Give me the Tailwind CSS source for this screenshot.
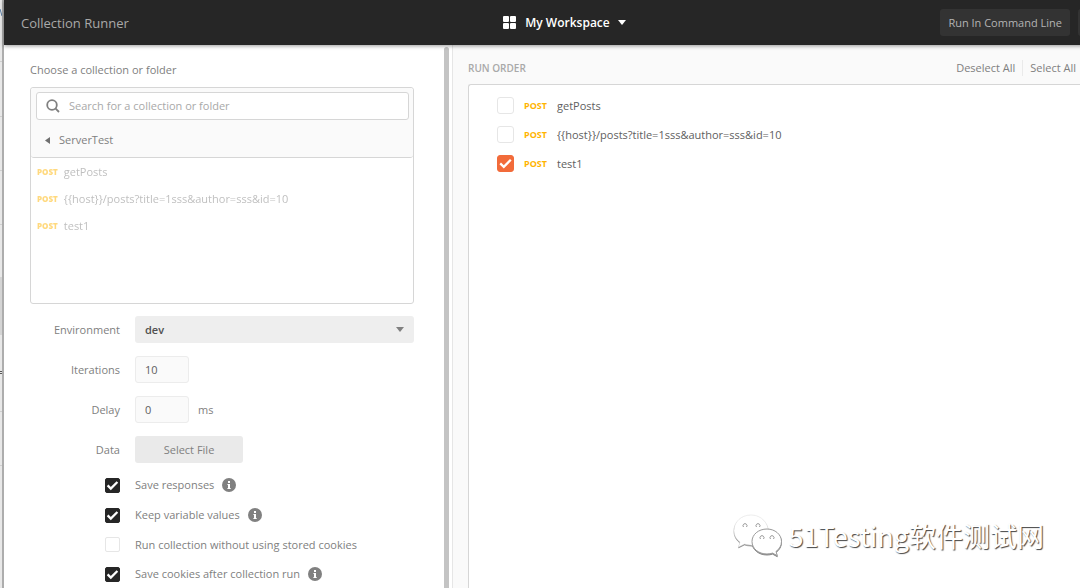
<!DOCTYPE html>
<html lang="en">
<head>
    <meta charset="UTF-8">
    <meta name="viewport" content="width=device-width, initial-scale=1.0">
    <title>Collection Runner</title>
    <script src="https://cdn.jsdelivr.net/npm/@tailwindcss/browser@4"></script>
</head>
<body class="font-['Open_Sans','Noto_Sans_CJK_SC',sans-serif] text-[11px] leading-4 text-[#808080]">
    <div class="relative flex h-screen overflow-hidden bg-white">
        <!-- sliver of the window behind -->
        <div class="flex w-1 shrink-0 flex-col border-r-2 border-[#adadad] bg-[#e8e8e8] overflow-hidden">
            <div class="h-[62px] border-b border-[#cfcfcf] pt-[9px]"><svg class="h-2 w-[2px]" viewBox="0 0 2 8" stroke="#5a7ea6"><path d="M0 0l2 7" /></svg></div>
            <div class="h-[55px] border-b border-[#cfcfcf]"></div>
            <div class="h-[54px] border-b border-[#cfcfcf]"></div>
            <div class="h-[54px] border-b border-[#cfcfcf]"></div>
            <div class="h-[52px]"></div>
            <div class="h-[58px] bg-[#d4d4d4]"></div>
            <div class="h-[77px] border-b border-[#cfcfcf] pt-9"><svg class="h-1 w-[2px]" viewBox="0 0 2 4" fill="#555"><path d="M0 0h2v1H0zM0 2h2v1H0z" /></svg></div>
            <div class="h-[54px] border-b border-[#cfcfcf]"></div>
        </div>

        <div class="flex min-w-0 flex-1 flex-col">
            <header class="relative z-10 -mr-7 flex h-[45px] shrink-0 items-center bg-[#262626] pl-[17px] shadow-[0_1px_4px_rgba(0,0,0,0.4)]">
                <h1 class="flex-1 text-[13px] text-[#a9a9a9]">Collection Runner</h1>
                <button type="button" class="flex items-center text-[12px] font-semibold text-white">
                    <svg class="mr-[9px] size-[13px]" viewBox="0 0 13 13" fill="currentColor">
                        <rect width="6" height="6" rx="1" />
                        <rect x="7" width="6" height="6" rx="1" />
                        <rect y="7" width="6" height="6" rx="1" />
                        <rect x="7" y="7" width="6" height="6" rx="1" />
                    </svg>
                    My Workspace
                    <svg class="ml-2 h-[5px] w-2" viewBox="0 0 8 5" fill="currentColor"><path d="M0 0h8L4 5z" /></svg>
                </button>
                <div class="flex flex-1 justify-end gap-2">
                    <button type="button" class="h-[27px] shrink-0 rounded-[3px] bg-[#333] px-2 text-[11px] text-[#b4b4b4]">Run In Command Line</button>
                    <button type="button" class="h-[27px] w-[30px] rounded-[3px] bg-[#333]" aria-label="Docs"></button>
                </div>
            </header>

            <main class="flex min-h-0 flex-1">
                <section class="w-[440px] shrink-0 pt-[17px] pr-[30px] pl-[26px]">
                    <label for="search" class="block">Choose a collection or folder</label>
                    <div class="mt-[9px] h-[217px] rounded-[3px] border border-[#d6d6d6]">
                        <div class="rounded-[3px] border-b border-[#d6d6d6] bg-[#fafafa] py-1 pr-1 pl-[5px]">
                            <div class="flex h-[28px] items-center rounded-[3px] border border-[#d6d6d6] bg-white pl-[9px]">
                                <svg class="size-[14px] shrink-0" viewBox="0 0 14 14" fill="none" stroke="#808080" stroke-width="1.8"><circle cx="6" cy="6" r="4.8" /><path d="M9.4 9.4l3.6 3.6" /></svg>
                                <input id="search" type="text" placeholder="Search for a collection or folder" class="ml-[9px] min-w-0 flex-1 outline-none placeholder:text-[#a9a9a9]">
                            </div>
                            <button type="button" class="flex h-[33px] items-center pt-[7px] pl-[9px]">
                                <svg class="mr-[9px] h-[7px] w-[5px]" viewBox="0 0 5 7" fill="#707070"><path d="M5 0v7L0 3.5z" /></svg>
                                ServerTest
                            </button>
                        </div>
                        <ul class="pl-[6px] text-[#808080] opacity-50">
                            <li class="flex h-[27px] items-center gap-[6px]"><span class="text-[8px] font-extrabold text-[#ffb400]">POST</span>getPosts</li>
                            <li class="flex h-[27px] items-center gap-[6px]"><span class="text-[8px] font-extrabold text-[#ffb400]">POST</span>{{host}}/posts?title=1sss&amp;author=sss&amp;id=10</li>
                            <li class="flex h-[27px] items-center gap-[6px]"><span class="text-[8px] font-extrabold text-[#ffb400]">POST</span>test1</li>
                        </ul>
                    </div>

                    <form class="mt-3">
                        <div class="grid grid-cols-[90px_1fr] items-center gap-x-[15px] gap-y-[13px]">
                            <label for="env" class="text-right">Environment</label>
                            <div class="relative">
                                <select id="env" class="block h-[27px] w-full appearance-none rounded-[3px] bg-[#eee] px-[10px] font-semibold text-[#505050]">
                                    <option>dev</option>
                                </select>
                                <svg class="pointer-events-none absolute top-[11px] right-[10px] h-[5px] w-2" viewBox="0 0 8 5" fill="#808080"><path d="M0 0h8L4 5z" /></svg>
                            </div>
                            <label for="iterations" class="text-right">Iterations</label>
                            <div><input id="iterations" type="text" value="10" class="block h-[27px] w-[54px] rounded-[3px] border border-[#ececec] bg-[#fafafa] px-[9px] text-[#606060]"></div>
                            <label for="delay" class="text-right">Delay</label>
                            <div class="flex items-center gap-[9px]"><input id="delay" type="text" value="0" class="block h-[27px] w-[54px] rounded-[3px] border border-[#ececec] bg-[#fafafa] px-[9px] text-[#606060]">ms</div>
                            <label for="file" class="text-right">Data</label>
                            <div><button id="file" type="button" class="block h-[27px] w-[108px] rounded-[3px] bg-[#eaeaea]">Select File</button></div>
                        </div>

                        <div class="mt-[7px] pl-[75px]">
                            <div class="flex h-[30px] items-center">
                                <span class="mr-[15px] grid size-[15px]">
                                    <input id="save" type="checkbox" checked class="peer col-start-1 row-start-1 size-[15px] appearance-none rounded-[2px] border border-[#e6e6e6] bg-white checked:border-[#262626] checked:bg-[#262626]">
                                    <svg class="pointer-events-none col-start-1 row-start-1 hidden size-[15px] peer-checked:block" viewBox="0 0 15 15" fill="none" stroke="#fff" stroke-width="2.3"><path d="M2.6 7.4l3.2 3.2 6.6-6.6" /></svg>
                                </span>
                                <label for="save">Save responses</label>
                                <svg class="ml-2 size-[14px]" viewBox="0 0 14 14"><circle cx="7" cy="7" r="7" fill="#808080" /><path d="M6 3h2v2H6zM5.4 6H8v4h.7v1H5.4v-1H6V7h-.6z" fill="#fff" /></svg>
                            </div>
                            <div class="flex h-[30px] items-center">
                                <span class="mr-[15px] grid size-[15px]">
                                    <input id="keep" type="checkbox" checked class="peer col-start-1 row-start-1 size-[15px] appearance-none rounded-[2px] border border-[#e6e6e6] bg-white checked:border-[#262626] checked:bg-[#262626]">
                                    <svg class="pointer-events-none col-start-1 row-start-1 hidden size-[15px] peer-checked:block" viewBox="0 0 15 15" fill="none" stroke="#fff" stroke-width="2.3"><path d="M2.6 7.4l3.2 3.2 6.6-6.6" /></svg>
                                </span>
                                <label for="keep">Keep variable values</label>
                                <svg class="ml-2 size-[14px]" viewBox="0 0 14 14"><circle cx="7" cy="7" r="7" fill="#808080" /><path d="M6 3h2v2H6zM5.4 6H8v4h.7v1H5.4v-1H6V7h-.6z" fill="#fff" /></svg>
                            </div>
                            <div class="flex h-[29px] items-center">
                                <span class="mr-[15px] grid size-[15px]">
                                    <input id="nocookies" type="checkbox" class="peer col-start-1 row-start-1 size-[15px] appearance-none rounded-[2px] border border-[#e6e6e6] bg-white checked:border-[#262626] checked:bg-[#262626]">
                                    <svg class="pointer-events-none col-start-1 row-start-1 hidden size-[15px] peer-checked:block" viewBox="0 0 15 15" fill="none" stroke="#fff" stroke-width="2.3"><path d="M2.6 7.4l3.2 3.2 6.6-6.6" /></svg>
                                </span>
                                <label for="nocookies">Run collection without using stored cookies</label>
                            </div>
                            <div class="flex h-[30px] items-center">
                                <span class="mr-[15px] grid size-[15px]">
                                    <input id="cookies" type="checkbox" checked class="peer col-start-1 row-start-1 size-[15px] appearance-none rounded-[2px] border border-[#e6e6e6] bg-white checked:border-[#262626] checked:bg-[#262626]">
                                    <svg class="pointer-events-none col-start-1 row-start-1 hidden size-[15px] peer-checked:block" viewBox="0 0 15 15" fill="none" stroke="#fff" stroke-width="2.3"><path d="M2.6 7.4l3.2 3.2 6.6-6.6" /></svg>
                                </span>
                                <label for="cookies">Save cookies after collection run</label>
                                <svg class="ml-2 size-[14px]" viewBox="0 0 14 14"><circle cx="7" cy="7" r="7" fill="#808080" /><path d="M6 3h2v2H6zM5.4 6H8v4h.7v1H5.4v-1H6V7h-.6z" fill="#fff" /></svg>
                            </div>
                        </div>
                    </form>
                </section>

                <!-- scrollbar -->
                <div class="mt-[2px] mr-[3px] w-[5px] shrink-0 rounded-t-full bg-[#c4c4c4]"></div>

                <section class="flex min-w-0 flex-1 flex-col border-l border-[#e6e6e6] bg-[#fafafa] pl-[15px]">
                    <div class="flex h-[39px] items-center justify-between pt-[6px] pr-1">
                        <h2 class="text-[10px] font-semibold text-[#a9a9a9]">RUN ORDER</h2>
                        <div class="flex items-center">
                            <button type="button" class="border-r border-[#eaeaea] pr-[7px]">Deselect All</button>
                            <button type="button" class="pl-[7px]">Select All</button>
                        </div>
                    </div>
                    <ul class="flex-1 rounded-tl-[3px] border-t border-l border-[#d6d6d6] bg-white pt-[6px] pl-7 text-[#606060]">
                        <li class="flex h-[29px] items-center">
                            <span class="mr-[10px] grid size-[17px]">
                                <input id="r1" type="checkbox" class="peer col-start-1 row-start-1 size-[17px] appearance-none rounded-[3px] border border-[#e6e6e6] bg-white checked:border-[#f26b3a] checked:bg-[#f26b3a]">
                                <svg class="pointer-events-none col-start-1 row-start-1 hidden size-[17px] peer-checked:block" viewBox="0 0 17 17" fill="none" stroke="#fff" stroke-width="2.3"><path d="M3.2 8.4l3.6 3.4 7-7" /></svg>
                            </span>
                            <label for="r1" class="flex items-center gap-[10px]"><span class="text-[9px] font-bold text-[#ffb400]">POST</span>getPosts</label>
                        </li>
                        <li class="flex h-[29px] items-center">
                            <span class="mr-[10px] grid size-[17px]">
                                <input id="r2" type="checkbox" class="peer col-start-1 row-start-1 size-[17px] appearance-none rounded-[3px] border border-[#e6e6e6] bg-white checked:border-[#f26b3a] checked:bg-[#f26b3a]">
                                <svg class="pointer-events-none col-start-1 row-start-1 hidden size-[17px] peer-checked:block" viewBox="0 0 17 17" fill="none" stroke="#fff" stroke-width="2.3"><path d="M3.2 8.4l3.6 3.4 7-7" /></svg>
                            </span>
                            <label for="r2" class="flex items-center gap-[10px]"><span class="text-[9px] font-bold text-[#ffb400]">POST</span>{{host}}/posts?title=1sss&amp;author=sss&amp;id=10</label>
                        </li>
                        <li class="flex h-[29px] items-center">
                            <span class="mr-[10px] grid size-[17px]">
                                <input id="r3" type="checkbox" checked class="peer col-start-1 row-start-1 size-[17px] appearance-none rounded-[3px] border border-[#e6e6e6] bg-white checked:border-[#f26b3a] checked:bg-[#f26b3a]">
                                <svg class="pointer-events-none col-start-1 row-start-1 hidden size-[17px] peer-checked:block" viewBox="0 0 17 17" fill="none" stroke="#fff" stroke-width="2.3"><path d="M3.2 8.4l3.6 3.4 7-7" /></svg>
                            </span>
                            <label for="r3" class="flex items-center gap-[10px]"><span class="text-[9px] font-bold text-[#ffb400]">POST</span>test1</label>
                        </li>
                    </ul>
                </section>
            </main>
        </div>

        <!-- watermark -->
        <div class="absolute right-9 bottom-[31px] flex items-center gap-[6px]">
            <svg class="h-[43px] w-[50px] drop-shadow-[0_1px_0_#888]" viewBox="0 0 50 43" fill="#fff" stroke="#ddd" stroke-width="0.5">
                <path d="M18 1C8 1 1 8 1 16.500c0 5 2.500 9 6 11.500l-1.500 5 6-3c3 1 7 1.400 10 1C36 30 36 20 35 14 33 6 26 1 18 1z" />
                <path stroke="#999" stroke-width="1" d="M34 15c-8.500 0-15 5.500-15 12.500S25.500 40 34 40c2 0 4-.3 5.500-.9l4.800 2.600-1.300-4.200c3.500-2.500 5.500-6 5.500-10C48.500 20.500 42 15 34 15z" />
                <g fill="none" stroke="#999" stroke-width="1"><path d="M10.500 13a2 2 0 1 1 3 0M23.500 13a2 2 0 1 1 3 0M27.500 25a2 2 0 1 1 3 0M37.500 25a2 2 0 1 1 3 0" /></g>
            </svg>
            <span class="font-['Noto_Sans_CJK_SC',sans-serif] text-[27px] leading-9 text-white [text-shadow:1px_1px_1px_#444]">51Testing软件测试网</span>
        </div>
    </div>
</body>
</html>
